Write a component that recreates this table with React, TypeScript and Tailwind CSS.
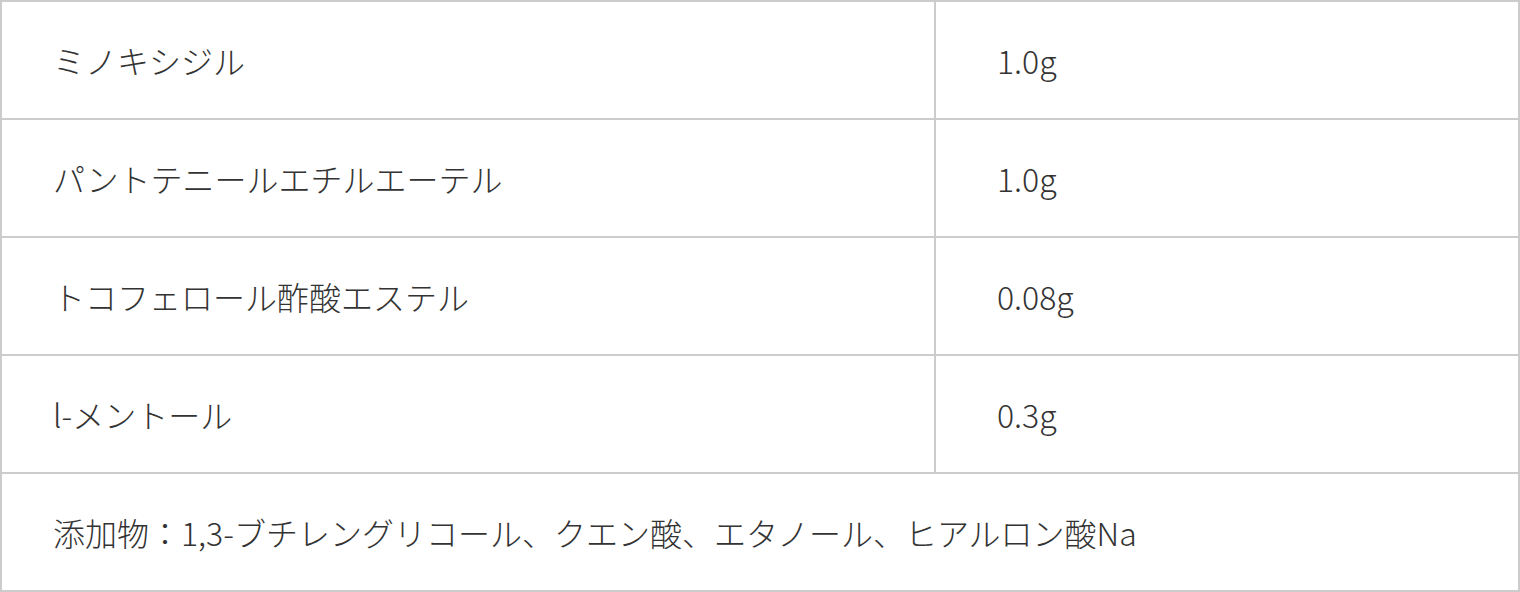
import React from "react";

const rows = [
  { name: "ミノキシジル", amount: "1.0g" },
  { name: "パントテニールエチルエーテル", amount: "1.0g" },
  { name: "トコフェロール酢酸エステル", amount: "0.08g" },
  { name: "l-メントール", amount: "0.3g" },
];

const App = () => {
  return (
    <div
      className="w-[1520px] h-[592px] bg-white"
      style={{ fontFamily: '"Noto Sans CJK JP", "Noto Sans", sans-serif' }}
    >
      <div className="grid grid-cols-[932px_582px] auto-rows-[116px] gap-[2px] p-[2px] bg-[#cccccc] text-[32px] font-light text-[#333333]">
        {rows.map((row) => (
          <React.Fragment key={row.name}>
            <div className="bg-white flex items-center pl-[51px]">{row.name}</div>
            <div className="bg-white flex items-center pl-[61px]">{row.amount}</div>
          </React.Fragment>
        ))}
        <div className="col-span-2 bg-white flex items-center pl-[51px]">
          添加物：1,3-ブチレングリコール、クエン酸、エタノール、ヒアルロン酸Na
        </div>
      </div>
    </div>
  );
};

export default App;
